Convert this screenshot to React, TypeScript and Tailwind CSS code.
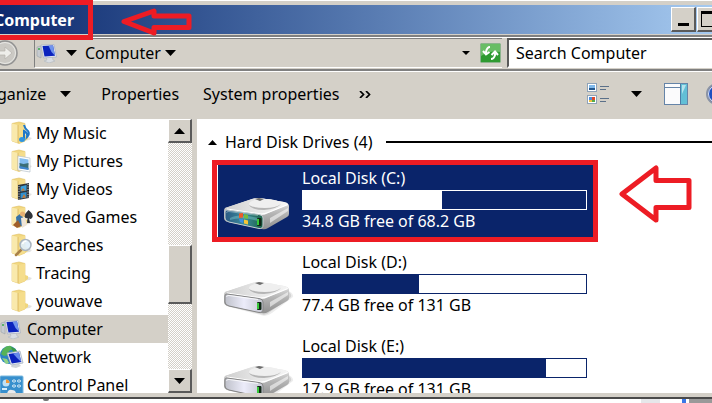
import type { ReactNode } from "react";

type IconName =
  | "music"
  | "pictures"
  | "videos"
  | "games"
  | "searches"
  | "folder"
  | "computer"
  | "network"
  | "control";

const places: { label: string; icon: IconName; nested?: boolean; selected?: boolean }[] = [
  { label: "My Music", icon: "music", nested: true },
  { label: "My Pictures", icon: "pictures", nested: true },
  { label: "My Videos", icon: "videos", nested: true },
  { label: "Saved Games", icon: "games", nested: true },
  { label: "Searches", icon: "searches", nested: true },
  { label: "Tracing", icon: "folder", nested: true },
  { label: "youwave", icon: "folder", nested: true },
  { label: "Computer", icon: "computer", selected: true },
  { label: "Network", icon: "network" },
  { label: "Control Panel", icon: "control" },
];

const drives = [
  { name: "Local Disk (C:)", note: "34.8 GB free of 68.2 GB", used: 49, selected: true },
  { name: "Local Disk (D:)", note: "77.4 GB free of 131 GB", used: 41, selected: false },
  { name: "Local Disk (E:)", note: "17.9 GB free of 131 GB", used: 86, selected: false },
];

function Caret({ className = "" }: { className?: string }) {
  return (
    <svg width="11" height="6" viewBox="0 0 11 6" className={className} aria-hidden="true">
      <path d="M0 0H11L5.5 6Z" fill="#000" />
    </svg>
  );
}

function Monitor() {
  return (
    <svg width="22" height="20" viewBox="0 0 22 20" aria-hidden="true">
      <path d="M1 4L5 3V15L1 13Z" fill="#c6cbd0" stroke="#9aa2aa" strokeWidth=".6" />
      <path d="M2 6h2" stroke="#39a849" strokeWidth="1.4" />
      <path d="M10 14l6-1 1 4 2 1-6 2-5-2 3-1Z" fill="#d9dde2" stroke="#b2b8bf" strokeWidth=".6" />
      <path d="M5 2L18 1.5 20.500 14 7.500 15Z" fill="#e3e7ef" stroke="#a8afbd" strokeWidth=".7" />
      <path d="M6.5 3L17 2.5 19 12.7 8.500 13.5Z" fill="#0b22bd" />
      <path d="M12.500 2.8L17 2.5 19 12.7 15.500 9Z" fill="#6f93ec" />
    </svg>
  );
}

function Folder({ children }: { children?: ReactNode }) {
  return (
    <svg width="24" height="24" viewBox="0 0 24 24" aria-hidden="true">
      <path d="M12 20l8-1 2-2-6-2Z" fill="#e2e2e2" />
      <path d="M2 2.5L9 1 15 2.5V20L9 22.5 2 20Z" fill="#f1d77f" stroke="#dfbd62" strokeWidth=".6" />
      <path d="M2 2.5L8 4V22L2 20Z" fill="#f9e9ac" />
      <path d="M8 4L15 2.5V20L8.5 22.5Z" fill="#f5dd8c" />
      <path d="M8 4V22" stroke="#d3ad50" strokeWidth=".7" />
      <path d="M15 14l3 1v3l-3 2Z" fill="#f0d67e" />
      {children}
    </svg>
  );
}

function PlaceIcon({ name }: { name: IconName }) {
  if (name === "computer") return <Monitor />;
  if (name === "network") {
    return (
      <svg width="24" height="24" viewBox="0 0 24 24" aria-hidden="true">
        <circle cx="9" cy="10" r="9" fill="#2c83c3" />
        <path d="M3 4q4-4 8-3l2 3-4 2-1 4-4 1-3-2Z" fill="#56b356" />
        <path d="M2 13l5 1 2 4-3 1Z" fill="#8fd284" />
        <path d="M11 2q5 1 6 5l-4 0Z" fill="#3b9a45" />
        <path d="M12 20l7-1 2 2-5 2-5-1Z" fill="#cfd4d8" />
        <path d="M7 8L20 6 23 18 11 20Z" fill="#e9edf3" stroke="#9aa7b8" strokeWidth=".7" />
        <path d="M8.5 9L19 7.5 21.3 17 11.8 18.5Z" fill="#0b22bd" />
        <path d="M13 8.4L19 7.5 21.3 17 17 13Z" fill="#688bea" />
      </svg>
    );
  }
  if (name === "control") {
    return (
      <svg width="24" height="20" viewBox="0 0 24 20" aria-hidden="true">
        <rect x="0" y="1" width="23" height="18" rx="1" fill="#378fcd" stroke="#78b8df" />
        <circle cx="6" cy="8" r="3.5" fill="#bfe0f4" />
        <path d="M6 8V4.500A3.500 3.500 0 0 1 9.500 8Z" fill="#f29a38" />
        <rect x="12.500" y="5" width="3" height="2" rx="1" fill="none" stroke="#e6f4fc" />
        <rect x="17.500" y="5" width="3" height="2" rx="1" fill="none" stroke="#e6f4fc" />
        <rect x="12.500" y="10" width="3" height="2" rx="1" fill="none" stroke="#e6f4fc" />
        <rect x="17.500" y="10" width="3" height="2" rx="1" fill="none" stroke="#e6f4fc" />
        <path d="M2 14h5" stroke="#d4ecf9" strokeWidth="2" />
        <path d="M7 19q1-5 5-4 4 0 4 4Z" fill="#e9eaec" />
      </svg>
    );
  }
  return (
    <Folder>
      {name === "music" && (
        <g>
          <path d="M14 4q1 4 4 6 2 3-1 6 1-4-3-6V18" fill="none" stroke="#1f78c8" strokeWidth="2" />
          <ellipse cx="12" cy="18.500" rx="3" ry="2.500" fill="#2f94e0" />
        </g>
      )}
      {name === "pictures" && (
        <g>
          <path d="M8 7L20 9V23L8 21Z" fill="#fff" stroke="#b6c2cb" strokeWidth=".7" />
          <path d="M9.500 9L18.500 10.500V16L9.500 15Z" fill="#83bdf0" />
          <path d="M9.500 14l4 1 5-1v6.500L9.500 19Z" fill="#3b6f78" />
          <path d="M9.500 17l9 2v2l-9-1.500Z" fill="#3f86cf" />
        </g>
      )}
      {name === "videos" && (
        <g>
          <path d="M8 8L19 6V21L8 23Z" fill="#31363c" />
          <path d="M10.500 9.500l6-1.500v5.500l-6 1Z" fill="#3da0dc" />
          <path d="M10.500 16l6-1v5.500l-6 1Z" fill="#2f8fce" />
          <path d="M11 14l2-3 2 2.500ZM12 21l2-4 2 3.500Z" fill="#c77a35" />
          <path d="M9 9V23M18 7V21" stroke="#c5cbd0" strokeWidth="1" strokeDasharray="1 1.500" />
        </g>
      )}
      {name === "games" && (
        <g>
          <path d="M18.500 5q6 5 3.500 8-2 2-3 0l1 5h-3l.5-5q-3 1-3-2 0-2 4-6Z" fill="#30343a" />
          <path d="M6 12l4-3 3 3-1 9-5 1Z" fill="#3773a8" />
          <circle cx="12.500" cy="9" r="2.500" fill="#e6b072" />
          <path d="M11 13l4-1 2 8-5 3Z" fill="#efe5d6" />
          <path d="M3 20l5-5 3 6-4 2Z" fill="#a05f2a" />
        </g>
      )}
      {name === "searches" && (
        <g>
          <path d="M11 17l-5 5" stroke="#a98148" strokeWidth="2.500" strokeLinecap="round" />
          <circle cx="15.500" cy="12" r="5.500" fill="#dfeefa" fillOpacity=".9" stroke="#a8b3bf" strokeWidth="1.500" />
          <path d="M12.500 11q1-3 4-3" fill="none" stroke="#fff" strokeWidth="1.500" />
        </g>
      )}
    </Folder>
  );
}

function DriveIcon({ system }: { system: boolean }) {
  const id = system ? "system" : "plain";
  return (
    <svg width="72" height="38" viewBox="0 0 72 38" className="shrink-0" aria-hidden="true">
      <defs>
        <linearGradient id={`${id}-top`} x1="0" y1="0" x2="1" y2="0">
          <stop offset="0" stopColor="#cfcfcf" />
          <stop offset=".5" stopColor="#e6e6e6" />
          <stop offset="1" stopColor="#f4f4f4" />
        </linearGradient>
        <linearGradient id={`${id}-side`} x1="0" y1="0" x2="0" y2="1">
          <stop offset="0" stopColor="#f0f0f0" />
          <stop offset=".5" stopColor="#b4b4b4" />
          <stop offset="1" stopColor="#8f8f8f" />
        </linearGradient>
        <linearGradient id={`${id}-face`} x1="0" y1="0" x2="1" y2="0">
          <stop offset="0" stopColor={system ? "#2b5a84" : "#bfc1ca"} />
          <stop offset=".5" stopColor={system ? "#3c8c9b" : "#ececfa"} />
          <stop offset="1" stopColor={system ? "#1c6148" : "#c4c6d0"} />
        </linearGradient>
      </defs>
      {!system && (
        <g fill="#000">
          <path d="M4 26L42 36Q46 36 50 33L71 17Q72 14 67 11L40 20Z" fillOpacity=".07" />
          <path d="M5 26L42 35Q45 35 48 32L69 17Q70 14 67 12L40 20Z" fillOpacity=".1" />
        </g>
      )}
      <path d="M3 12L30 3Q34 2 38 2L62 6Q67 7 67 10V18Q67 20 65 21L46 32Q43 34 40 33L6 26Q2 25 2 22V15Q2 13 3 12Z" fill={`url(#${id}-side)`} />
      <path d="M3 12L30 3Q34 2 38 2L62 6Q67 7 65 9L46 17Q43 19 40 19L5 14Z" fill={`url(#${id}-top)`} />
      <ellipse cx="43" cy="8" rx="16" ry="5" fill="#efefef" />
      <path d="M27 9q3 5 15 5 13-1 17-6-5 4-16 4-11 0-16-3Z" fill="#b5b5b5" />
      <path d="M33 3l4-1 5 1-4 2Z" fill="#6d6d6d" />
      <path d="M5 13L39 18Q43 18 46 16.500L66 8.500" fill="none" stroke="#fff" strokeWidth="1.200" />
      <path d="M48 22L66 12V15L48 27Z" fill="#fff" fillOpacity=".55" />
      <path d="M5 14L37 18.500Q41 19 41 22V29Q41 33 37 32.500L7 26Q3 25 3 22V16Q3 14 5 14Z" fill={`url(#${id}-face)`} stroke={system ? "#c3ccd0" : "#858585"} />
      <path d="M4.500 17Q5 15 7 15.500L36 19.500" fill="none" stroke="#fff" strokeOpacity={system ? ".35" : ".8"} />
      {system && (
        <g>
          <path d="M8 22q8-5 28 0v3q-16-5-28-1Z" fill="#7ec7cf" fillOpacity=".45" />
          <path d="M17 17.500l4-.5 0 4.500-4 .5Z" fill="#ef5a28" />
          <path d="M22 18l4 1v4l-4-1Z" fill="#74bc3f" />
          <path d="M17 23l4 0 0 4-3-1Z" fill="#3d8ee2" />
          <path d="M22 23.500l4 1v4l-4-1Z" fill="#f7c536" />
        </g>
      )}
      <rect x="35" y="22" width="4.500" height="8" rx="1" fill="#112716" />
      <rect x="35" y="23" width="2" height="6" fill="#36c838" />
    </svg>
  );
}

function RedArrow({ className, path, box }: { className: string; path: string; box: string }) {
  return (
    <svg viewBox={box} className={className} aria-hidden="true">
      <path d={path} fill="none" stroke="#ed1c24" strokeWidth="5" strokeLinejoin="round" />
    </svg>
  );
}

const bevel =
  "flex shrink-0 items-center justify-center border-t border-l border-r-2 border-b-2 border-t-white border-l-white border-r-[#5a5a5a] border-b-[#5a5a5a] bg-[#d4d0c8]";

export default function App() {
  return (
    <div className="flex h-screen flex-col overflow-hidden bg-white font-['Noto_Sans',sans-serif] text-base text-black">
      <div className="-mr-10 -ml-6 flex min-h-0 flex-1 flex-col border-t border-white bg-[#d4d0c8]">
        <header className="relative mt-1 flex h-[29px] shrink-0 items-center bg-linear-to-r from-[#0a246a] to-[#a6caf0] to-95% pr-1 pl-[18px]">
          <h1 className="font-bold text-white">Computer</h1>
          <div className="ml-auto flex gap-px">
            <button type="button" aria-label="Minimize" className={`${bevel} h-[25px] w-[25px] items-end pb-1`}>
              <span className="h-[3px] w-[11px] bg-black" />
            </button>
            <button type="button" aria-label="Maximize" className={`${bevel} h-[25px] w-[25px]`}>
              <span className="h-4 w-[17px] border border-t-[3px] border-black" />
            </button>
            <button type="button" aria-label="Close" className={`${bevel} h-[25px] w-[25px]`}>
              <svg width="12" height="10" viewBox="0 0 12 10" aria-hidden="true">
                <path d="M1 0l10 10M11 0L1 10" stroke="#000" strokeWidth="2" />
              </svg>
            </button>
          </div>
          <span className="absolute -top-[5px] left-0 h-10 w-[117px] border-[5px] border-[#ed1c24]" />
          <RedArrow
            className="absolute top-[2px] left-[144px] h-[29px] w-[72px]"
            box="0 0 72 29"
            path="M4 14.500L34 4V9H69V20.500H34V26Z"
          />
        </header>

        <div className="mt-px flex h-9 shrink-0 items-stretch border-t-2 border-b-2 border-t-[#808080] border-b-[#808080] shadow-[inset_0_1px_0_#fff,0_1px_0_#fff]">
          <button type="button" aria-label="Forward" className="flex w-[58px] items-center justify-end pr-4">
            <svg width="26" height="26" viewBox="0 0 26 26" className="shrink-0" aria-hidden="true">
              <circle cx="13" cy="13" r="12" fill="#cbc9c4" stroke="#929292" strokeWidth="1.500" />
              <circle cx="13" cy="13" r="10.500" fill="none" stroke="#e8e8e5" />
              <path d="M5 11h8V7l7 6-7 6v-4H5Z" fill="#eeeeea" stroke="#b4b2ac" strokeWidth=".7" />
            </svg>
          </button>
          <div className="my-px flex flex-1 items-center border-t border-b border-l border-t-[#808080] border-b-white border-l-[#808080] pl-px">
            <Monitor />
            <Caret className="ml-2" />
            <span className="ml-2">Computer</span>
            <Caret className="ml-1" />
            <svg width="8" height="5" viewBox="0 0 8 5" className="ml-auto" aria-hidden="true">
              <path d="M0 0H8L4 4Z" fill="#000" />
            </svg>
            <button type="button" aria-label="Refresh" className="ml-2.5 pr-px">
              <svg width="21" height="20" viewBox="0 0 21 20" aria-hidden="true">
                <rect x=".5" y=".5" width="20" height="19" rx="1" fill="#2f9a31" stroke="#8bb38c" />
                <path d="M1 1H20V9Q10 7 1 13Z" fill="#69bd65" />
                <path d="M10 4Q7 4 6 9V11M3 8L6 11.500 9.500 9" fill="none" stroke="#fff" strokeWidth="2" />
                <path d="M11 16Q14 16 15 12V9M11.500 12L15 8.500 18 12" fill="none" stroke="#fff" strokeWidth="2" />
              </svg>
            </button>
          </div>
          <input
            type="text"
            aria-label="Search Computer"
            placeholder="Search Computer"
            className="my-px ml-[5px] w-[245px] border-2 border-t-[#5a5a5a] border-r-white border-b-white border-l-[#5a5a5a] bg-white pl-[7px] outline-none placeholder:text-black"
          />
        </div>

        <nav className="flex h-12 shrink-0 items-center pb-0.5 pl-0.5">
          <button type="button" className="flex items-center gap-3.5">
            Organize
            <Caret />
          </button>
          <button type="button" className="ml-[30px]">Properties</button>
          <button type="button" className="ml-6">System properties</button>
          <button type="button" aria-label="More commands" className="ml-5">
            <svg width="12" height="7" viewBox="0 0 12 7" aria-hidden="true">
              <path d="M1 0l3.500 3.500L1 7M7 0l3.500 3.500L7 7" fill="none" stroke="#000" strokeWidth="1.700" />
            </svg>
          </button>
          <button type="button" aria-label="Change your view" className="ml-auto flex items-center gap-[22px]">
            <svg width="22" height="22" viewBox="0 0 22 22" aria-hidden="true">
              <rect x=".5" y=".5" width="9" height="8" fill="#fff" stroke="#8fa3b8" />
              <rect x="2" y="2" width="6" height="3" fill="#7fb9ec" />
              <rect x="2" y="5" width="6" height="2" fill="#24588e" />
              <rect x=".5" y="12.500" width="9" height="8" fill="#fff" stroke="#8fa3b8" />
              <path d="M2 14h3v3H2z" fill="#4f8ddb" />
              <path d="M5 14h3v3H5z" fill="#e04a2c" />
              <path d="M2 17h3v2H2z" fill="#f1be3c" />
              <path d="M5 17h3v2H5z" fill="#56ab4a" />
              <path d="M13 3.500h9M13 6.500h6M13 15.500h9M13 18.500h6" stroke="#5b7089" />
            </svg>
            <Caret />
          </button>
          <button type="button" aria-label="Show the preview pane" className="ml-[22px]">
            <svg width="24" height="22" viewBox="0 0 24 22" aria-hidden="true">
              <rect x=".5" y=".5" width="23" height="21" fill="#fbfbfc" stroke="#6584a8" />
              <path d="M1 4.500H17" stroke="#6584a8" />
              <rect x="17" y="1" width="6" height="20" fill="#62bfd6" />
              <path d="M16.500 1V21" stroke="#4d7ca5" />
              <path d="M18 2l4 0-4 9Z" fill="#b6e3ee" />
            </svg>
          </button>
          <button type="button" aria-label="Get help" className="mr-6 ml-[18px]">
            <svg width="22" height="22" viewBox="0 0 22 22" aria-hidden="true">
              <circle cx="11" cy="11" r="10" fill="#1f4fc0" stroke="#8a93a5" strokeWidth="2" />
              <circle cx="11" cy="11" r="8.500" fill="none" stroke="#dfe6f5" />
            </svg>
          </button>
        </nav>

        <div className="flex min-h-0 flex-1">
          <aside className="flex w-[216px] shrink-0 overflow-hidden">
            <ul className="flex-1 bg-white">
              {places.map((place) => (
                <li key={place.label} className={place.selected ? "bg-[#d4d0c8]" : ""}>
                  <a
                    href="#"
                    className={
                      place.nested
                        ? "flex h-7 items-center pl-[34px] whitespace-nowrap"
                        : "flex h-7 items-center pl-6 whitespace-nowrap"
                    }
                  >
                    <span className={place.nested ? "w-[26px]" : "w-[27px]"}>
                      <PlaceIcon name={place.icon} />
                    </span>
                    {place.label}
                  </a>
                </li>
              ))}
            </ul>
            <div className="flex w-6 flex-col bg-[repeating-conic-gradient(#fff_0_25%,#d4d0c8_0_50%)] bg-[length:2px_2px]">
              <button type="button" aria-label="Scroll up" className={`${bevel} h-6`}>
                <Caret className="rotate-180" />
              </button>
              <div className={`${bevel} mt-auto h-[59px]`} />
              <button type="button" aria-label="Scroll down" className={`${bevel} mt-[65px] h-6`}>
                <Caret />
              </button>
            </div>
          </aside>

          <main className="ml-[5px] flex-1 overflow-hidden bg-white">
            <div className="flex h-[46px] items-center pl-[11px]">
              <Caret className="h-[5px] w-[9px] rotate-180" />
              <h2 className="ml-2">Hard Disk Drives (4)</h2>
              <span className="ml-3.5 h-0.5 flex-1 bg-black" />
            </div>
            <ul className="ml-[21px] w-[375px]">
              {drives.map((drive) => (
                <li
                  key={drive.name}
                  className={
                    drive.selected
                      ? "relative mb-3 flex bg-[#0a246a] pt-px text-white"
                      : "mb-3 flex pt-px"
                  }
                >
                  <div className="mt-[30px] w-[84px] shrink-0 pl-1">
                    <DriveIcon system={drive.selected} />
                  </div>
                  <div className="w-[285px] pb-[5px]">
                    <p className="leading-6">{drive.name}</p>
                    <div className={drive.selected ? "h-5 border border-white" : "h-5 border border-[#0a246a]"}>
                      <div
                        className={drive.selected ? "h-full bg-white" : "h-full bg-[#0a246a]"}
                        style={{ width: `${drive.used}%` }}
                      />
                    </div>
                    <p className="leading-[22px]">{drive.note}</p>
                  </div>
                  {drive.selected && (
                    <>
                      <span className="absolute -inset-y-[5px] -right-[5px] -left-[6px] border-[5px] border-[#ed1c24]" />
                      <RedArrow
                        className="absolute top-0 left-[400px] h-[60px] w-[76px]"
                        box="0 0 76 60"
                        path="M4 29L38 3V15.500H71V42.500H38V55Z"
                      />
                    </>
                  )}
                </li>
              ))}
            </ul>
          </main>
        </div>
        <div className="h-1 shrink-0" />
      </div>

      <footer className="flex h-1.5 shrink-0 items-stretch border-t-2 border-[#4a4a4a]">
        <span className="ml-[43px] h-0.5 w-1.5 rounded-b bg-[#777]" />
        <span className="ml-auto w-[19px] bg-[#e6e7ea]" />
        <span className="ml-[22px] w-1 bg-[#3b78e7]" />
        <span className="ml-[3px] w-[23px] bg-[#999]" />
      </footer>
    </div>
  );
}
